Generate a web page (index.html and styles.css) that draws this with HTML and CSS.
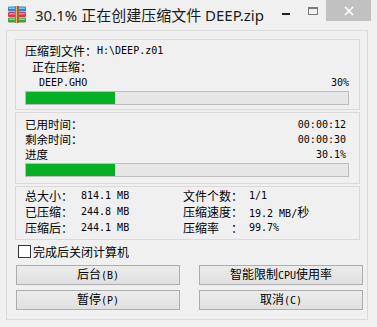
FILE: index.html
```html
<!DOCTYPE html>
<html lang="zh-CN">
<head>
    <meta charset="UTF-8">
    <title>30.1% 正在创建压缩文件 DEEP.zip</title>
    <link rel="stylesheet" href="styles.css">
</head>
<body>
    <div class="window">
        <div class="titlebar">
            <svg class="app-icon" width="18" height="17" viewBox="0 0 18 17">
                <rect x="0" y="0.5" width="18" height="5" rx="1" fill="#2f86d6"/>
                <rect x="1" y="1.5" width="16" height="1.5" fill="#7fc2f0"/>
                <rect x="0" y="6" width="18" height="5" rx="1" fill="#d33a52"/>
                <rect x="1" y="7" width="16" height="1.5" fill="#f0889a"/>
                <rect x="0" y="11.5" width="18" height="5" rx="1" fill="#3aa043"/>
                <rect x="1" y="12.5" width="16" height="1.5" fill="#8fd37e"/>
                <rect x="7" y="0" width="4" height="17" fill="#9a6a32"/>
                <rect x="7.8" y="0" width="1.2" height="17" fill="#e0b56a"/>
            </svg>
            <div class="title">30.1% 正在创建压缩文件 DEEP.zip</div>
            <div class="controls">
                <div class="ctl ctl-min"><span></span></div>
                <div class="ctl ctl-max"><span></span></div>
                <div class="ctl ctl-close">
                    <svg width="10" height="10" viewBox="0 0 10 10">
                        <path d="M1 1 L9 9 M9 1 L1 9" stroke="#fff" stroke-width="1.6"/>
                    </svg>
                </div>
            </div>
        </div>

        <div class="panel">
            <div class="group g1">
                <div class="row r1">压缩到文件：<span class="mono">H:\DEEP.z01</span></div>
                <div class="row r2">正在压缩：</div>
                <div class="row r3"><span class="mono">DEEP.GHO</span><span class="mono">30%</span></div>
                <div class="bar"><div class="fill" style="width: 27.5%"></div></div>
            </div>

            <div class="group g2">
                <div class="row"><span>已用时间：</span><span class="mono">00:00:12</span></div>
                <div class="row"><span>剩余时间：</span><span class="mono">00:00:30</span></div>
                <div class="row"><span>进度</span><span class="mono">30.1%</span></div>
                <div class="bar"><div class="fill" style="width: 27.5%"></div></div>
            </div>

            <div class="group g3">
                <div class="stats">
                    <span>总大小：</span><span class="mono">814.1 MB</span>
                    <span>文件个数：</span><span class="mono">1/1</span>
                    <span>已压缩：</span><span class="mono">244.8 MB</span>
                    <span>压缩速度：</span><span><span class="mono">19.2 MB/</span>秒</span>
                    <span>压缩后：</span><span class="mono">244.1 MB</span>
                    <span>压缩率<span class="sp"></span>：</span><span class="mono">99.7%</span>
                </div>
            </div>

            <label class="check">
                <span class="box"></span>
                <span>完成后关闭计算机</span>
            </label>

            <div class="buttons">
                <button>后台<span class="key">(B)</span></button>
                <button>智能限制<span class="key">CPU</span>使用率</button>
                <button>暂停<span class="key">(P)</span></button>
                <button>取消<span class="key">(C)</span></button>
            </div>
        </div>
    </div>
</body>
</html>
```

FILE: styles.css
```css
body {
    margin: 0;
    padding: 0;
    background: #f0f0f0;
    font-family: "Noto Sans CJK SC", "Noto Sans", sans-serif;
    font-size: 12px;
    color: #000;
}
.window {
    width: 377px;
    height: 327px;
    overflow: hidden;
}

/* title bar */
.titlebar {
    display: flex;
    height: 30px;
    align-items: flex-start;
}
.app-icon {
    margin-top: 6px;
    margin-left: 8px;
}
.title {
    margin-left: 9px;
    margin-top: 4px;
    font-family: "Noto Sans", "Noto Sans CJK SC", sans-serif;
    font-size: 15px;
    line-height: 22px;
    color: #1b1b1b;
}
.controls {
    display: flex;
    margin-left: auto;
    margin-right: 6px;
}
.ctl {
    height: 21px;
    display: flex;
    justify-content: center;
}
.ctl-min {
    width: 26px;
}
.ctl-min span {
    width: 8px;
    height: 2px;
    margin-top: 13px;
    background: #222;
}
.ctl-max {
    width: 27px;
}
.ctl-max span {
    width: 8px;
    height: 5px;
    margin-top: 7px;
    border: 1px solid #7a7a7a;
    border-top-width: 2px;
}
.ctl-close {
    width: 45px;
    background: #c1c1c1;
    align-items: center;
}

/* main panel */
.panel {
    display: flex;
    flex-direction: column;
    margin-left: 6px;
    width: 362px;
    height: 290px;
    border: 1px solid #dadada;
    padding: 8px 7px 0 8px;
    box-sizing: border-box;
}
.group {
    border: 1px solid #d9d9d9;
    box-sizing: border-box;
}
.g1 {
    height: 71px;
    padding: 3px 10px 0 9px;
}
.g2 {
    height: 72px;
    margin-top: 2px;
    padding: 4px 10px 0 9px;
}
.g3 {
    height: 54px;
    margin-top: 2px;
    padding: 1px 0 0 9px;
}
.row {
    display: flex;
    justify-content: space-between;
    white-space: pre;
}
.g1 .r1 {
    height: 16px;
    line-height: 16px;
    justify-content: flex-start;
}
.g1 .r2 {
    height: 16px;
    line-height: 16px;
    padding-left: 7px;
}
.g1 .r3 {
    height: 15px;
    line-height: 15px;
    padding-left: 14px;
}
.g1 .bar {
    margin-top: 1px;
}
.g2 .row {
    height: 15px;
    line-height: 15px;
    padding-right: 3px;
    font-size: 11.5px;
}
.g2 .bar {
    margin-top: 1px;
}
.mono {
    font-family: "DejaVu Sans Mono", "Liberation Mono", monospace;
    font-size: 10px;
}
.bar {
    height: 14px;
    border: 1px solid #bcbcbc;
    background: #e6e6e6;
    box-sizing: border-box;
}
.fill {
    height: 100%;
    background: #06b025;
}

.stats {
    display: grid;
    grid-template-columns: 56px 102px 66px auto;
    grid-auto-rows: 16px;
    line-height: 16px;
    white-space: pre;
}
.sp {
    display: inline-block;
    width: 12px;
}

/* checkbox */
.check {
    display: flex;
    align-items: center;
    height: 13px;
    margin-top: 5px;
    margin-left: 3px;
    line-height: 13px;
}
.box {
    width: 13px;
    height: 13px;
    box-sizing: border-box;
    border: 1px solid #333;
    background: #fff;
    margin-right: 2px;
}

/* buttons */
.buttons {
    display: grid;
    grid-template-columns: 164px 164px;
    grid-auto-rows: 20px;
    column-gap: 19px;
    row-gap: 5px;
    margin-top: 7px;
    margin-left: 1px;
}
.buttons button {
    font-family: "Noto Sans CJK SC", sans-serif;
    font-size: 12px;
    line-height: 16px;
    padding: 0;
    border: 1px solid #adadad;
    background: linear-gradient(#ececec, #e0e0e0);
    color: #000;
}
.key {
    font-family: "DejaVu Sans Mono", monospace;
    font-size: 10px;
}
```
